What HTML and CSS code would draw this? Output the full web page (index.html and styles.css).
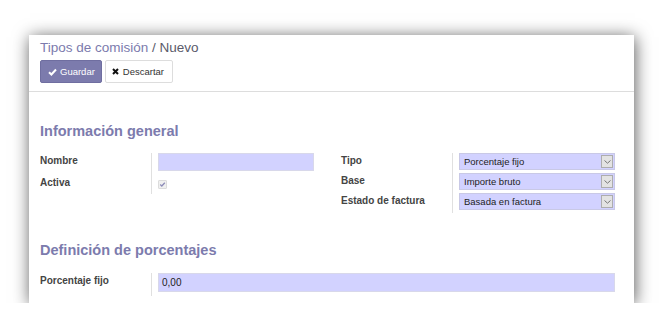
FILE: index.html
```html
<!DOCTYPE html>
<html lang="es">
<head>
    <meta charset="UTF-8">
    <title>Tipos de comisión / Nuevo</title>
    <link rel="stylesheet" href="styles.css">
</head>
<body>
    <div class="panel">
        <!-- cabecera -->
        <div class="control-panel">
            <div class="breadcrumb">
                <a href="#" class="crumb">Tipos de comisión</a>
                <span class="crumb-active">/ Nuevo</span>
            </div>
            <div class="buttons">
                <button class="btn btn-primary">
                    <svg width="9" height="8" viewBox="0 0 9 8"><path d="M1 4.2 L3.4 6.5 L8 1.5" fill="none" stroke="#fff" stroke-width="2"/></svg>
                    Guardar
                </button>
                <button class="btn btn-default">
                    <svg width="7" height="7" viewBox="0 0 7 7"><path d="M1 1 L6 6 M6 1 L1 6" fill="none" stroke="#111" stroke-width="2"/></svg>
                    Descartar
                </button>
            </div>
        </div>

        <!-- formulario -->
        <div class="sheet">
            <h2>Información general</h2>
            <div class="groups">
                <div class="group group-left">
                    <div class="label">Nombre</div>
                    <div class="field"><div class="input"></div></div>
                    <div class="label">Activa</div>
                    <div class="field"><span class="checkbox">
                        <svg width="7" height="7" viewBox="0 0 7 7"><path d="M1.2 3.6 L2.8 5 L5.8 1.8" fill="none" stroke="#8d8cb8" stroke-width="1.3"/></svg>
                    </span></div>
                </div>
                <div class="group group-right">
                    <div class="label">Tipo</div>
                    <div class="field"><div class="select"><span>Porcentaje fijo</span><i class="arrow"><svg width="7" height="4" viewBox="0 0 7 4"><path d="M0.5 0.5 L3.5 3.2 L6.5 0.5" fill="none" stroke="#777" stroke-width="1"/></svg></i></div></div>
                    <div class="label">Base</div>
                    <div class="field"><div class="select"><span>Importe bruto</span><i class="arrow"><svg width="7" height="4" viewBox="0 0 7 4"><path d="M0.5 0.5 L3.5 3.2 L6.5 0.5" fill="none" stroke="#777" stroke-width="1"/></svg></i></div></div>
                    <div class="label">Estado de factura</div>
                    <div class="field"><div class="select"><span>Basada en factura</span><i class="arrow"><svg width="7" height="4" viewBox="0 0 7 4"><path d="M0.5 0.5 L3.5 3.2 L6.5 0.5" fill="none" stroke="#777" stroke-width="1"/></svg></i></div></div>
                </div>
            </div>

            <h2 class="second">Definición de porcentajes</h2>
            <div class="group group-wide">
                <div class="label">Porcentaje fijo</div>
                <div class="field"><div class="input input-value">0,00</div></div>
            </div>
        </div>
    </div>
</body>
</html>
```

FILE: styles.css
```css
:root {
    --primary-color: #7c7bad;
    --required-color: #d2d2ff;
    --border-color: #e0e0e0;
}

body {
    font-family: 'Liberation Sans', Arial, sans-serif;
    margin: 0;
    background: #fff;
}

.panel {
    margin: 35px 0 0 29px;
    width: 605px;
    height: 268px;
    background: #fff;
    box-shadow: 1px 2px 16px rgba(0,0,0,0.65);
}

/* cabecera */
.control-panel {
    padding: 3px 11px 8px;
    border-bottom: 1px solid #ddd;
}

.breadcrumb {
    font-size: 13.5px;
    line-height: 19px;
}

.crumb {
    color: var(--primary-color);
    text-decoration: none;
}

.crumb-active {
    color: #5a5a6a;
}

.buttons {
    display: flex;
    gap: 3px;
    margin-top: 3px;
}

.btn {
    display: flex;
    align-items: center;
    gap: 3px;
    height: 23px;
    padding: 0 6px 0 7px;
    font-family: inherit;
    font-size: 9.5px;
    border-radius: 2px;
    cursor: pointer;
}

.btn-primary {
    background: var(--primary-color);
    border: 1px solid #6f6ea0;
    color: #fff;
}

.btn-default {
    background: #fff;
    border: 1px solid #ddd;
    color: #333;
    padding: 0 8px 0 6px;
    gap: 4px;
}

/* formulario */
.sheet {
    padding: 31px 19px 0 11px;
}

h2 {
    margin: 0 0 13px;
    font-size: 14.5px;
    line-height: 17px;
    color: var(--primary-color);
}

h2.second {
    margin-top: 29px;
    margin-bottom: 14px;
}

.groups {
    display: flex;
    gap: 27px;
}

.group {
    display: grid;
    width: 274px;
    grid-template-columns: 111px 1fr;
    grid-auto-rows: 20px;
}

.group-left {
    grid-template-rows: 22px 19px;
}

.group-wide {
    width: auto;
    grid-auto-rows: 23px;
}

.label {
    padding-top: 1px;
    font-size: 10px;
    line-height: 14px;
    font-weight: bold;
    color: #444;
}

.field {
    border-left: 1px solid var(--border-color);
    padding-left: 6px;
}

.input {
    height: 18px;
    box-sizing: border-box;
    background: var(--required-color);
    border: 1px solid #d8d8ea;
}

.group-wide .input {
    height: 19px;
}

.input-value {
    padding-left: 3px;
    font-size: 10px;
    line-height: 17px;
    color: #222;
}

.checkbox {
    display: flex;
    align-items: center;
    justify-content: center;
    width: 9px;
    height: 9px;
    margin-top: 5px;
    box-sizing: border-box;
    background: #f0f0f0;
    border: 1px solid #dcdcdc;
    border-radius: 1px;
}

.select {
    display: flex;
    align-items: center;
    justify-content: space-between;
    height: 17px;
    box-sizing: border-box;
    background: var(--required-color);
    border: 1px solid #c9c9e6;
    padding: 0 1px 0 4px;
    font-size: 9.5px;
    color: #222;
}

.arrow {
    display: flex;
    align-items: center;
    justify-content: center;
    width: 12px;
    height: 13px;
    box-sizing: border-box;
    background: #e3e3e3;
    border: 1px solid #adadad;
}
```
